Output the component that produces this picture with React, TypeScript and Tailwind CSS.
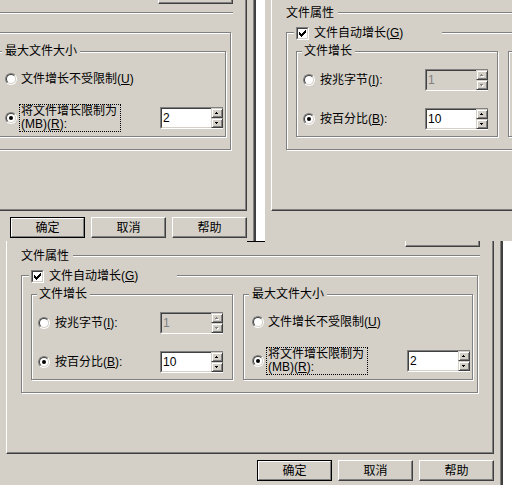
import type { ReactNode } from "react";

// Win2000 风格的控件
function WinButton({
  children,
  isDefault,
  className,
}: {
  children?: ReactNode;
  isDefault?: boolean;
  className: string;
}) {
  if (isDefault) {
    return (
      <div className={`shrink-0 border border-black ${className}`}>
        <div className="flex size-full items-center justify-center border border-t-white border-l-white border-r-[#808080] border-b-[#808080]">
          {children}
        </div>
      </div>
    );
  }
  return (
    <div
      className={`flex shrink-0 items-center justify-center border border-t-white border-l-white border-r-[#404040] border-b-[#404040] shadow-[inset_-1px_-1px_0_#808080] ${className}`}
    >
      {children}
    </div>
  );
}

function Radio({ checked }: { checked?: boolean }) {
  return (
    <span className="flex size-3 shrink-0 rounded-full border border-t-[#808080] border-l-[#808080] border-r-white border-b-white">
      <span className="flex size-full items-center justify-center rounded-full border border-t-[#404040] border-l-[#404040] border-r-[#d4d0c8] border-b-[#d4d0c8] bg-white">
        {checked && <span className="size-1 rounded-full bg-black" />}
      </span>
    </span>
  );
}

function CheckBox() {
  // 7x7 勾号，按列画
  const cols = [2, 3, 4, 3, 2, 1, 0];
  return (
    <span className="flex size-[13px] shrink-0 border border-t-[#808080] border-l-[#808080] border-r-white border-b-white">
      <span className="flex size-full items-center justify-center border border-t-[#404040] border-l-[#404040] border-r-[#d4d0c8] border-b-[#d4d0c8] bg-white">
        <svg width="7" height="7" viewBox="0 0 7 7" shapeRendering="crispEdges">
          {cols.map((top, i) => (
            <rect key={i} x={i} y={top} width="1" height="3" fill="#000" />
          ))}
        </svg>
      </span>
    </span>
  );
}

function Arrow({ up, disabled }: { up?: boolean; disabled?: boolean }) {
  const fill = disabled ? "#808080" : "#000";
  return (
    <svg width="4" height="3" viewBox="0 0 4 3" shapeRendering="crispEdges">
      {disabled && (
        <>
          <rect x={up ? 2 : 1} y="1" width={up ? 1 : 3} height="1" fill="#fff" />
          <rect x={up ? 1 : 2} y="2" width={up ? 3 : 1} height="1" fill="#fff" />
        </>
      )}
      <rect x={up ? 1 : 0} y="0" width={up ? 1 : 3} height="1" fill={fill} />
      <rect x={up ? 0 : 1} y="1" width={up ? 3 : 1} height="1" fill={fill} />
    </svg>
  );
}

function SpinButton({ up, disabled }: { up?: boolean; disabled?: boolean }) {
  return (
    <div className="flex flex-1 items-center justify-center border border-t-[#d4d0c8] border-l-[#d4d0c8] border-r-[#404040] border-b-[#404040] bg-[#d4d0c8] shadow-[inset_1px_1px_0_#fff,inset_-1px_-1px_0_#808080]">
      <Arrow up={up} disabled={disabled} />
    </div>
  );
}

function SpinEdit({ value, disabled }: { value: string; disabled?: boolean }) {
  return (
    <div className="ml-auto flex h-[22px] w-[63px] shrink-0 border-t border-l border-b border-t-[#808080] border-l-[#808080] border-b-white">
      <div
        className={`flex flex-1 items-center border-t border-l border-b border-t-[#404040] border-l-[#404040] border-b-[#d4d0c8] pl-px ${
          disabled ? "bg-[#d4d0c8] text-[#808080]" : "bg-white text-black"
        }`}
      >
        {value}
      </div>
      <div className="flex w-[12px] flex-col">
        <SpinButton up disabled={disabled} />
        <SpinButton disabled={disabled} />
      </div>
    </div>
  );
}

function GroupBox({
  legend,
  legendClass,
  className,
  children,
}: {
  legend: ReactNode;
  legendClass: string;
  className: string;
  children: ReactNode;
}) {
  return (
    <div
      className={`relative shrink-0 border border-[#808080] shadow-[inset_1px_1px_0_#fff,1px_1px_0_#fff] ${className}`}
    >
      <div className={`absolute flex h-[14px] items-center bg-[#d4d0c8] ${legendClass}`}>
        {legend}
      </div>
      {children}
    </div>
  );
}

// 整个属性页的一张“截图”，三处复用
function DialogSnapshot() {
  return (
    <div className="flex h-[264px] w-[533px] bg-white font-[family-name:'Liberation_Sans','Noto_Sans_CJK_SC',sans-serif] text-[12px] leading-[14px] text-black">
      <div className="w-[10px] shrink-0" />
      <div className="flex w-[503px] shrink-0 flex-col border-r-2 border-[#404040] bg-[#d4d0c8] pr-[7px] pl-[6px] shadow-[inset_-1px_0_0_#808080]">
        <div className="flex h-[232px] shrink-0 flex-col border-r border-b border-l border-r-[#404040] border-b-[#404040] border-l-white shadow-[inset_-1px_-1px_0_#808080]">
          <WinButton className="mt-[2px] ml-[398px] h-[23px] w-[75px]" />

          <div className="flex h-[18px] items-center">
            <span className="ml-[14px]">文件属性</span>
            <div className="mr-[13px] ml-[4px] h-[2px] flex-1 border-t border-b border-t-[#808080] border-b-white" />
          </div>

          <GroupBox
            className="mt-[10px] ml-[14px] h-[118px] w-[457px]"
            legendClass="left-[7px] top-[-7px] w-[148px] pl-[2px]"
            legend={
              <>
                <CheckBox />
                <span className="ml-[5px]">
                  文件自动增长(<u>G</u>)
                </span>
              </>
            }
          >
            <div className="mt-[18px] ml-[9px] flex gap-[10px]">
              <GroupBox
                className="h-[86px] w-[202px]"
                legendClass="left-[5px] top-[-8px] pr-[3px] pl-[2px]"
                legend="文件增长"
              >
                <div className="mt-[17px] flex h-[22px] items-center pr-[9px] pl-[6px]">
                  <Radio />
                  <span className="ml-[5px]">
                    按兆字节(<u>I</u>):
                  </span>
                  <SpinEdit value="1" disabled />
                </div>
                <div className="mt-[17px] flex h-[22px] items-center pr-[9px] pl-[6px]">
                  <Radio checked />
                  <span className="ml-[5px]">
                    按百分比(<u>B</u>):
                  </span>
                  <SpinEdit value="10" />
                </div>
              </GroupBox>

              <GroupBox
                className="h-[86px] w-[230px]"
                legendClass="left-[5px] top-[-8px] pr-[3px] pl-[3px]"
                legend="最大文件大小"
              >
                <div className="mt-[15px] flex h-[24px] items-center pr-[2px] pl-[8px]">
                  <Radio />
                  <span className="ml-[4px]">
                    文件增长不受限制(<u>U</u>)
                  </span>
                </div>
                <div className="mt-[13px] flex h-[28px] items-center pr-[2px] pl-[8px]">
                  <Radio checked />
                  <span className="ml-[2px] w-[102px] border border-dotted border-black pl-px leading-[13px]">
                    将文件增长限制为
                    <br />
                    (MB)(<u>R</u>):
                  </span>
                  <SpinEdit value="2" />
                </div>
              </GroupBox>
            </div>
          </GroupBox>
        </div>

        <div className="mt-[6px] flex justify-end gap-[6px]">
          <WinButton isDefault className="h-[21px] w-[75px]">
            确定
          </WinButton>
          <WinButton className="h-[21px] w-[75px]">取消</WinButton>
          <WinButton className="h-[21px] w-[75px]">帮助</WinButton>
        </div>
      </div>
    </div>
  );
}

export default function App() {
  return (
    <div className="relative h-[485px] w-[512px] overflow-hidden bg-white">
      {/* 左上：对话框右半部分 */}
      <div className="absolute top-0 left-0 h-[241px] w-[256px] overflow-hidden">
        <div className="absolute top-[-21px] left-[-257px]">
          <DialogSnapshot />
        </div>
      </div>
      {/* 右上：对话框左半部分 */}
      <div className="absolute top-0 left-[256px] h-[241px] w-[256px] overflow-hidden">
        <div className="absolute top-[-21px] left-[-1px]">
          <DialogSnapshot />
        </div>
      </div>
      {/* 下方：完整对话框 */}
      <div className="absolute top-[241px] left-0 h-[244px] w-[512px] overflow-hidden">
        <div className="absolute top-[-19px] left-[-10px]">
          <DialogSnapshot />
        </div>
      </div>
      <div className="absolute top-[241px] left-[247px] h-px w-[18px] bg-black" />
    </div>
  );
}
